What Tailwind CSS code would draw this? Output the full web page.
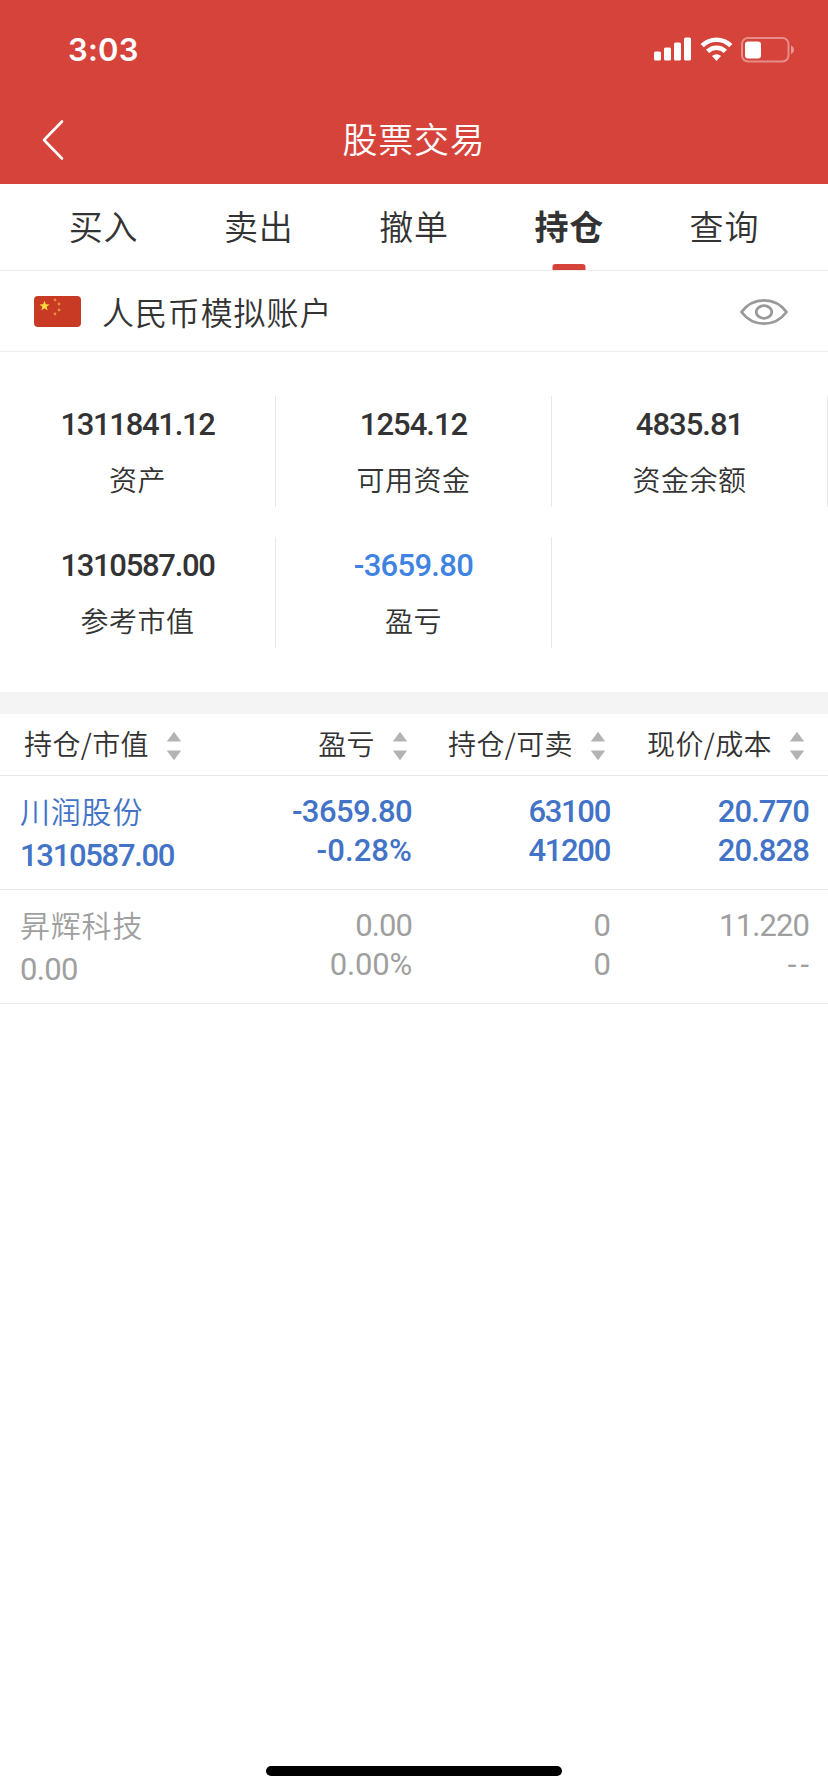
<!DOCTYPE html>
<html lang="zh-CN">
<head>
  <meta charset="UTF-8">
  <meta name="viewport" content="width=device-width, initial-scale=1.0">
  <title>股票交易</title>
  <script src="https://cdn.jsdelivr.net/npm/@tailwindcss/browser@4"></script>
</head>
<body class="bg-white text-[#333] h-[1792px] flex flex-col overflow-hidden font-['Noto_Sans_CJK_SC',sans-serif]">
<svg class="hidden">
  <symbol id="sort" viewBox="0 0 16 30">
    <path d="M8 .7 15.200 10.500H.8zM8 29.300.8 19.500h14.400z" fill="#b3b3b3"/>
  </symbol>
</svg>

<header class="bg-[#d5433b] text-white h-[184px]">
  <!-- status bar -->
  <div class="h-[98px] flex items-center justify-between pl-[68px] pr-[33px]">
    <span class="font-['Inter',sans-serif] font-semibold text-[31px] leading-none tracking-[0.2px] pt-px">3:03</span>
    <div class="flex items-center">
      <svg width="37" height="24" viewBox="0 0 37 24" fill="#fff">
        <rect x="0" y="14.500" width="7" height="9" rx="1.500"/>
        <rect x="10" y="10.500" width="7" height="13" rx="1.500"/>
        <rect x="20" y="5.500" width="7" height="18" rx="1.500"/>
        <rect x="30" y=".5" width="7" height="23" rx="1.500"/>
      </svg>
      <svg class="ml-[9px]" width="33" height="24" viewBox="0 0 33 24" fill="none" stroke="#fff" stroke-width="4.600">
        <path d="M2.200 8.600a20.400 20.400 0 0 1 28.600 0"/>
        <path d="M7.600 14.400a12.800 12.800 0 0 1 17.800 0"/>
        <path d="M12 19.100a6.500 6.500 0 0 1 9 0L16.500 24z" fill="#fff" stroke="none"/>
      </svg>
      <svg class="ml-[8px] mt-px" width="54" height="26" viewBox="0 0 54 26">
        <rect x="1" y="1" width="46.500" height="23.500" rx="6" fill="none" stroke="#fff" stroke-opacity=".4" stroke-width="2"/>
        <rect x="4" y="4.500" width="16" height="17" rx="3" fill="#fff"/>
        <path d="M50 8.500c4 1.500 4 7 0 8.500z" fill="#fff" fill-opacity=".45"/>
      </svg>
    </div>
  </div>
  <!-- title bar -->
  <div class="h-[84px] grid grid-cols-3 items-center">
    <svg class="ml-[41px]" width="24" height="42" viewBox="0 0 24 42" fill="none" stroke="#fff" stroke-width="2.600" stroke-linecap="round" stroke-linejoin="round">
      <path d="M21 2.500 3 21l18 18.500"/>
    </svg>
    <h1 class="text-center text-[35px] leading-[80px] pb-1 tracking-[0.8px] font-[350]">股票交易</h1>
  </div>
</header>

<nav class="h-[87px] px-[26px] grid grid-cols-5 border-b border-[#ececec] text-center text-[34px] leading-[84px] tracking-[0.8px] font-[350]">
  <a>买入</a>
  <a>卖出</a>
  <a>撤单</a>
  <a class="relative font-bold">持仓<span class="absolute left-1/2 -translate-x-1/2 bottom-0 w-[33px] h-[6px] rounded-t-[3px] bg-[#d5433b]"></span></a>
  <a>查询</a>
</nav>

<section class="h-[81px] flex items-center pl-[34px] pr-[39px] border-b border-[#ececec]">
  <svg class="mt-px" width="47" height="31" viewBox="0 0 47 31">
    <rect width="47" height="31" rx="4" fill="#c93a25"/>
    <path d="m10.500 4.800 1.300 3.500 3.700.2-2.900 2.300 1 3.600-3.100-2.100-3.100 2.100 1-3.600-2.900-2.300 3.700-.2z" fill="#fbdc3c"/>
    <g fill="#e0913a"><circle cx="21" cy="4" r="1.400"/><circle cx="25" cy="8" r="1.400"/><circle cx="25" cy="14" r="1.400"/><circle cx="21" cy="18" r="1.400"/></g>
  </svg>
  <span class="ml-[21px] text-[32px] leading-[80px] tracking-[0.9px] font-[350]">人民币模拟账户</span>
  <svg class="ml-auto mt-[2px]" width="50" height="28" viewBox="0 0 50 28" fill="none" stroke="#999" stroke-width="2.800">
    <path d="M2.500 14C14-1.500 36-1.500 47.500 14 36 29.500 14 29.500 2.500 14z" stroke-linejoin="round"/>
    <ellipse cx="25" cy="14" rx="7.800" ry="6.300"/>
  </svg>
</section>

<section class="h-[340px] pt-[44px] grid grid-cols-3 content-start gap-y-[30px] text-center text-[28px] font-[350]">
  <div class="h-[111px] border-r border-[#e8e8e8]">
    <p class="font-['Roboto',sans-serif] font-medium text-[31px] tracking-[-1.3px] leading-[58px]">1311841.12</p>
    <p class="leading-[51px] tracking-[0.5px]">资产</p>
  </div>
  <div class="h-[111px] border-r border-[#e8e8e8]">
    <p class="font-['Roboto',sans-serif] font-medium text-[31px] tracking-[-1px] leading-[58px]">1254.12</p>
    <p class="leading-[51px] tracking-[0.5px]">可用资金</p>
  </div>
  <div class="h-[111px] border-r border-[#e8e8e8]">
    <p class="font-['Roboto',sans-serif] font-medium text-[31px] tracking-[-1px] leading-[58px]">4835.81</p>
    <p class="leading-[51px] tracking-[0.5px]">资金余额</p>
  </div>
  <div class="h-[111px] border-r border-[#e8e8e8]">
    <p class="font-['Roboto',sans-serif] font-medium text-[31px] tracking-[-1.3px] leading-[58px]">1310587.00</p>
    <p class="leading-[51px] tracking-[0.5px]">参考市值</p>
  </div>
  <div class="h-[111px] border-r border-[#e8e8e8]">
    <p class="font-['Roboto',sans-serif] font-medium text-[31px] tracking-[-0.7px] leading-[58px] text-[#3e83e2]">-3659.80</p>
    <p class="leading-[51px] tracking-[0.5px]">盈亏</p>
  </div>
</section>

<div class="h-[22px] bg-[#f4f4f4]"></div>

<main class="flex-1">
  <div class="h-[62px] grid grid-cols-[214px_198px_198px_199px] items-center border-b border-[#e8e8e8] text-[28px] leading-[56px] tracking-[0.4px] font-[350]">
    <div class="flex items-center gap-[17px] pl-[24px]"><span class="pb-1">持仓/市值</span><svg class="w-4 h-[30px] mt-[3px]"><use href="#sort"/></svg></div>
    <div class="flex items-center justify-end gap-[17px] pr-[4px]"><span class="pb-1">盈亏</span><svg class="w-4 h-[30px] mt-[3px]"><use href="#sort"/></svg></div>
    <div class="flex items-center justify-end gap-[17px] pr-[4px]"><span class="pb-1">持仓/可卖</span><svg class="w-4 h-[30px] mt-[3px]"><use href="#sort"/></svg></div>
    <div class="flex items-center justify-end gap-[17px] pr-[4px]"><span class="pb-1">现价/成本</span><svg class="w-4 h-[30px] mt-[3px]"><use href="#sort"/></svg></div>
  </div>

  <div class="h-[114px] grid grid-cols-[214px_198px_198px_199px] border-b border-[#e8e8e8] text-[#4273c7] text-right text-[31px] leading-[39px] tracking-[-0.9px] font-['Roboto',sans-serif] font-medium">
    <div class="pl-[20px] pt-[12px] text-left">
      <p class="font-['Noto_Sans_CJK_SC',sans-serif] font-[350] text-[30px] tracking-[0.8px] leading-[44px]">川润股份</p>
      <p class="leading-[48px] tracking-[-1.3px]">1310587.00</p>
    </div>
    <div class="pt-[16px]"><p class="tracking-[-0.6px]">-3659.80</p><p class="tracking-[0.1px]">-0.28%</p></div>
    <div class="pt-[16px] tracking-[-1.3px]"><p>63100</p><p>41200</p></div>
    <div class="pt-[16px]"><p>20.770</p><p>20.828</p></div>
  </div>

  <div class="h-[114px] grid grid-cols-[214px_198px_198px_199px] border-b border-[#e8e8e8] text-[#9f9f9f] text-right text-[31px] leading-[39px] tracking-[-0.9px] font-['Roboto',sans-serif]">
    <div class="pl-[20px] pt-[12px] text-left">
      <p class="font-['Noto_Sans_CJK_SC',sans-serif] font-[350] text-[30px] tracking-[0.8px] leading-[44px]">昇辉科技</p>
      <p class="leading-[48px] tracking-[-0.7px]">0.00</p>
    </div>
    <div class="pt-[16px]"><p>0.00</p><p class="tracking-[-0.2px]">0.00%</p></div>
    <div class="pt-[16px]"><p>0</p><p>0</p></div>
    <div class="pt-[16px]"><p>11.220</p><p class="tracking-[4px] -mr-1">--</p></div>
  </div>
</main>

<div class="w-[296px] h-[10px] mx-auto mb-4 rounded-full bg-black"></div>
</body>
</html>
